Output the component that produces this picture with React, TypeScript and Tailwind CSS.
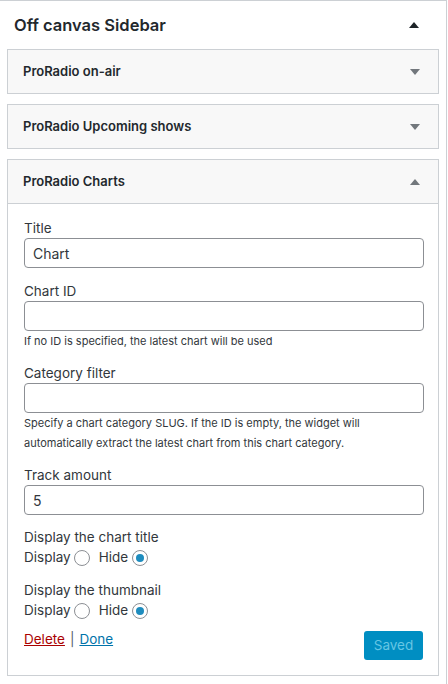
import React from "react";

const font = { fontFamily: "Inter, 'Noto Sans', sans-serif" };

const Arrow = ({ up, dark }: { up?: boolean; dark?: boolean }) => (
  <svg width="10" height="6" viewBox="0 0 10 6" className="block">
    <path
      d={up ? "M0 6 L5 0 L10 6 Z" : "M0 0 L10 0 L5 6 Z"}
      fill={dark ? "#1d2327" : "#72777c"}
    />
  </svg>
);

const Radio = ({ checked }: { checked?: boolean }) => (
  <span className="flex h-[16px] w-[16px] shrink-0 items-center justify-center rounded-full border border-[#8c8f94] bg-white">
    {checked && <span className="h-[8px] w-[8px] rounded-full bg-[#1e8cbe]" />}
  </span>
);

const Field = ({ label, value, className }: { label: string; value?: string; className?: string }) => (
  <div className={className}>
    <div className="h-[20px] text-[13.5px] leading-[20px] text-[#32373c]">{label}</div>
    <div className="flex h-[30px] items-center rounded-[4px] border border-[#8c8f94] bg-white px-[8px] text-[14px] text-[#32373c]">
      {value}
    </div>
  </div>
);

const RadioRow = ({ label, className }: { label: string; className?: string }) => (
  <div className={className}>
    <div className="h-[20px] text-[13.5px] leading-[20px] text-[#32373c]">{label}</div>
    <div className="flex h-[20px] items-center text-[13.5px] leading-[20px] text-[#32373c]">
      <span>Display</span>
      <span className="ml-[3px] mt-[2px] flex">
        <Radio />
      </span>
      <span className="ml-[9px]">Hide</span>
      <span className="ml-[4px] mt-[2px] flex">
        <Radio checked />
      </span>
    </div>
  </div>
);

const CollapsedWidget = ({ title }: { title: string }) => (
  <div className="flex h-[45px] items-center justify-between border border-[#ccd0d4] bg-[#f8f8f8] pl-[15px] pr-[18px]">
    <span className="text-[13px] font-semibold text-[#23282d]">{title}</span>
    <Arrow />
  </div>
);

export default function App() {
  return (
    <div className="h-[684px] w-[448px] overflow-hidden bg-white" style={font}>
      <div className="h-full w-[447px] border-r border-t border-[#ccd0d4]">
        <div className="flex h-[48px] items-center justify-between pl-[14px] pr-[27px]">
          <span className="text-[16.5px] font-semibold text-[#23282d]">Off canvas Sidebar</span>
          <Arrow up dark />
        </div>

        <div className="flex flex-col gap-[10px] pl-[7px] pr-[7px]">
          <CollapsedWidget title="ProRadio on-air" />
          <CollapsedWidget title="ProRadio Upcoming shows" />

          <div className="border border-[#ccd0d4] bg-white">
            <div className="flex h-[44px] items-center justify-between border-b border-[#ccd0d4] bg-[#f8f8f8] pl-[15px] pr-[18px]">
              <span className="text-[13px] font-semibold text-[#23282d]">ProRadio Charts</span>
              <Arrow up />
            </div>

            <div className="pb-[15px] pl-[16px] pr-[14px] pt-[14px]">
              <Field label="Title" value="Chart" />
              <Field label="Chart ID" className="mt-[13px]" />
              <div className="h-[20px] text-[11px] leading-[20px] text-[#32373c]">
                If no ID is specified, the latest chart will be used
              </div>
              <Field label="Category filter" className="mt-[12px]" />
              <div className="pt-[1px] text-[11px] leading-[19.5px] text-[#32373c]">
                Specify a chart category SLUG. If the ID is empty, the widget will automatically extract the latest
                chart from this chart category.
              </div>
              <Field label="Track amount" value="5" className="mt-[12px]" />
              <RadioRow label="Display the chart title" className="mt-[12px]" />
              <RadioRow label="Display the thumbnail" className="mt-[13px]" />

              <div className="mt-[9px] flex items-start justify-between">
                <div className="flex text-[13.5px] leading-[20px]">
                  <span className="text-[#a00] underline">Delete</span>
                  <span className="px-[5px] text-[#555d66]">|</span>
                  <span className="text-[#0073aa] underline">Done</span>
                </div>
                <div className="mr-[1px] mt-[2px] flex h-[29px] w-[59px] items-center justify-center rounded-[3px] bg-[#008ec2] text-[13.5px] text-[#66c6e4]">
                  Saved
                </div>
              </div>
            </div>
          </div>
        </div>
      </div>
    </div>
  );
}
